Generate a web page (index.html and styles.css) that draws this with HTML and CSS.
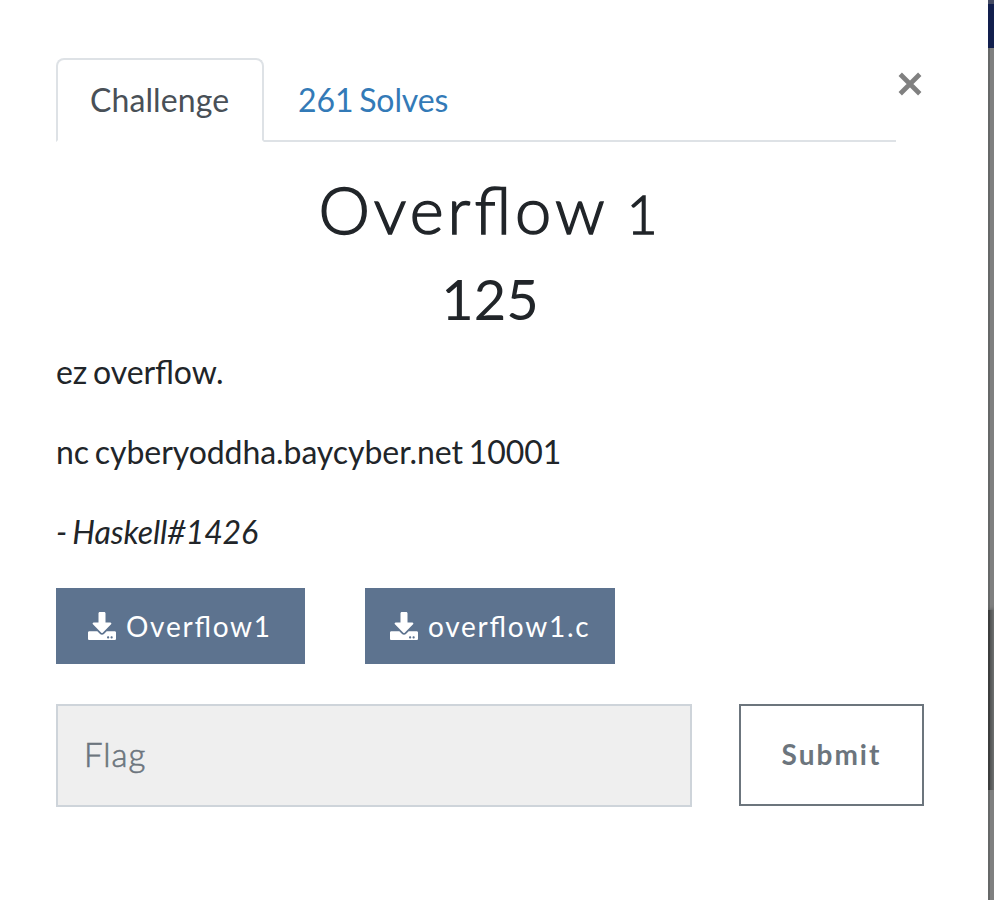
FILE: index.html
```html
<!DOCTYPE html>
<html lang="en">
<head>
<meta charset="utf-8">
<title>Overflow 1</title>
<link rel="stylesheet" href="styles.css">
</head>
<body>
<main class="modal">
  <header class="top">
    <nav class="tabs">
      <a class="tab active">Challenge</a>
      <a class="tab">261 Solves</a>
    </nav>
    <button class="close" aria-label="Close"><svg viewBox="0 0 24 24"><path d="M3 3L21 21M21 3L3 21"/></svg></button>
  </header>
  <h2 class="title">Overflow <span class="numeral">1</span></h2>
  <h3 class="points">125</h3>
  <section class="description">
    <p>ez overflow.</p>
    <p>nc cyberyoddha.baycyber.net 10001</p>
    <p><em>- Haskell#1426</em></p>
  </section>
  <div class="files">
    <a class="file first"><svg viewBox="0 0 512 512"><path d="M216 0h80c13.300 0 24 10.700 24 24v168h87.700c17.800 0 26.700 21.500 14.100 34.100L269.700 378.300c-7.500 7.500-19.800 7.500-27.300 0L90.100 226.100c-12.600-12.600-3.700-34.100 14.100-34.100H192V24c0-13.300 10.700-24 24-24zm296 376v112c0 13.300-10.700 24-24 24H24c-13.300 0-24-10.700-24-24V376c0-13.300 10.700-24 24-24h146.700l49 49c20.100 20.100 52.500 20.100 72.600 0l49-49H488c13.300 0 24 10.700 24 24zm-124 88c0-11-9-20-20-20s-20 9-20 20 9 20 20 20 20-9 20-20zm64 0c0-11-9-20-20-20s-20 9-20 20 9 20 20 20 20-9 20-20z"/></svg><span>Overflow1</span></a>
    <a class="file"><svg viewBox="0 0 512 512"><path d="M216 0h80c13.300 0 24 10.700 24 24v168h87.700c17.800 0 26.700 21.500 14.100 34.100L269.700 378.300c-7.500 7.500-19.800 7.500-27.300 0L90.100 226.100c-12.600-12.600-3.700-34.100 14.100-34.100H192V24c0-13.300 10.700-24 24-24zm296 376v112c0 13.300-10.700 24-24 24H24c-13.300 0-24-10.700-24-24V376c0-13.300 10.700-24 24-24h146.700l49 49c20.100 20.100 52.500 20.100 72.600 0l49-49H488c13.300 0 24 10.700 24 24zm-124 88c0-11-9-20-20-20s-20 9-20 20 9 20 20 20 20-9 20-20zm64 0c0-11-9-20-20-20s-20 9-20 20 9 20 20 20 20-9 20-20z"/></svg><span>overflow1.c</span></a>
  </div>
  <form class="answer">
    <input class="flag" type="text" placeholder="Flag">
    <button class="submit" type="button">Submit</button>
  </form>
</main>
<aside class="backdrop"><div class="navbar"></div><div class="page"></div><div class="scroll"></div><div class="page"></div></aside>
</body>
</html>
```
FILE: styles.css
```css
* { box-sizing: border-box; }
body {
  margin: 0;
  height: 900px;
  overflow: hidden;
  display: flex;
  background: #fff;
  color: #212529;
  font: 32px/48px Lato, sans-serif;
  font-feature-settings: "liga" 1;
  word-spacing: -2.3px;
}
.modal { width: 988px; padding: 58px 64px 0 56px; }
.top { display: flex; height: 84px; }
.tabs { width: 840px; display: flex; border-bottom: 2px solid #dee2e6; }
.tab {
  height: 84px;
  padding: 16px 32px 0;
  border: 2px solid transparent;
  color: #337ab7;
  white-space: nowrap;
  letter-spacing: -0.1px;
}
.active {
  width: 208px;
  padding-right: 0;
  border-color: #dee2e6 #dee2e6 #fff;
  border-radius: 8px 8px 0 0;
  color: #495057;
  letter-spacing: 0.1px;
}
.close { width: 28px; height: 52px; padding: 0; border: 0; background: none; }
.close svg { display: block; width: 26px; height: 26px; margin-left: 1px; }
.close path { fill: none; stroke: #808080; stroke-width: 4.4; }
.title {
  margin: 29px 0 0;
  height: 77px;
  font-size: 65px;
  line-height: 77px;
  font-weight: 300;
  letter-spacing: 4px;
  text-align: center;
  white-space: nowrap;
  -webkit-text-stroke: 1.5px #212529;
}
.numeral { font-size: 53px; }
.points {
  margin: 17px 0 0;
  height: 67px;
  font-size: 56px;
  line-height: 67px;
  font-weight: 400;
  text-align: center;
}
.description { margin-top: 16px; }
.description p { margin: 0 0 32px; letter-spacing: -0.07px; }
.files { display: flex; gap: 60px; }
.file {
  width: 250px;
  height: 76px;
  padding-left: 25px;
  display: flex;
  align-items: center;
  background: #5d738f;
  color: #fff;
  font-size: 28px;
  letter-spacing: 1.75px;
  white-space: nowrap;
}
.file span { padding-bottom: 1px; }
.first { width: 249px; padding-left: 32px; }
.file svg { width: 28px; height: 28px; margin-right: 10px; fill: #fff; }
.answer { display: flex; justify-content: space-between; margin-top: 40px; }
.flag {
  width: 636px;
  height: 103px;
  padding: 0 26px 3px;
  border: 2px solid #ced4da;
  border-radius: 0;
  background: #efefef;
  font: 300 33px Lato, sans-serif;
  letter-spacing: 1px;
}
.flag::placeholder { color: #6c757d; opacity: 1; -webkit-text-stroke: 0.6px #6c757d; }
.submit {
  width: 185px;
  height: 102px;
  padding: 0 0 2px;
  border: 2px solid #6c757d;
  background: #fff;
  color: #6c757d;
  font: 700 28px Lato, sans-serif;
  letter-spacing: 2px;
}
.backdrop { width: 6px; display: flex; flex-direction: column; overflow: hidden; }
.navbar { height: 48px; border-top: 4px solid #454b64; background: #121f4d; }
.page { flex: 562; background: linear-gradient(90deg, #666868 2px, #7f8080 2px); }
.scroll { height: 180px; background: linear-gradient(90deg, #3c3e3e 2px, #505252 2px, #707272); box-shadow: 0 0 4px #505252; }
.scroll + .page { flex: 110; }
```
